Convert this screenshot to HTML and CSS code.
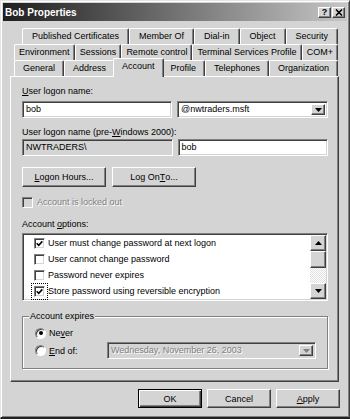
FILE: index.html
```html
<!DOCTYPE html>
<html lang="en">
<head>
    <meta charset="UTF-8">
    <title>Bob Properties</title>
    <link rel="stylesheet" href="styles.css">
</head>
<body>
    <div class="window">
        <div class="titlebar">
            <span class="title">Bob Properties</span>
            <span class="cap-buttons">
                <span class="cap-btn">?</span>
                <span class="cap-btn">
                    <svg width="8" height="7" viewBox="0 0 8 7"><path d="M1 .5L7 6.5M7 .5L1 6.5" stroke="#000" stroke-width="1.6"/></svg>
                </span>
            </span>
        </div>

        <div class="tabs">
            <div class="tab-row back">
                <div class="tab">Published Certificates</div>
                <div class="tab">Member Of</div>
                <div class="tab">Dial-in</div>
                <div class="tab">Object</div>
                <div class="tab">Security</div>
            </div>
            <div class="tab-row">
                <div class="tab">Environment</div>
                <div class="tab">Sessions</div>
                <div class="tab">Remote control</div>
                <div class="tab">Terminal Services Profile</div>
                <div class="tab">COM+</div>
            </div>
            <div class="tab-row">
                <div class="tab">General</div>
                <div class="tab">Address</div>
                <div class="tab selected">Account</div>
                <div class="tab">Profile</div>
                <div class="tab">Telephones</div>
                <div class="tab">Organization</div>
            </div>
        </div>

        <div class="panel">
            <div class="label first"><u>U</u>ser logon name:</div>
            <div class="field-row top">
                <div class="textbox">bob</div>
                <div class="combo">
                    <span class="combo-text">@nwtraders.msft</span>
                    <span class="drop-btn">
                        <svg width="7" height="4" viewBox="0 0 7 4"><path d="M0 0h7L3.5 4z"/></svg>
                    </span>
                </div>
            </div>
            <div class="label">User logon name (pre-<u>W</u>indows 2000):</div>
            <div class="field-row">
                <div class="textbox readonly">NWTRADERS\</div>
                <div class="textbox">bob</div>
            </div>
            <div class="button-row">
                <div class="btn wide"><u>L</u>ogon Hours...</div>
                <div class="btn wide">Log On <u>T</u>o...</div>
            </div>
            <div class="lock-row">
                <span class="check disabled"></span>
                <span class="disabled-text">Account is locked out</span>
            </div>
            <div class="label options-label">Account <u>o</u>ptions:</div>
            <div class="listbox">
                <div class="options">
                    <div class="option">
                        <span class="check"><svg width="7" height="7" viewBox="0 0 7 7"><path d="M.7 3.3L2.7 5.3L6.3 1.4" fill="none" stroke="#000" stroke-width="1.6"/></svg></span>
                        User must change password at next logon
                    </div>
                    <div class="option">
                        <span class="check"></span>
                        User cannot change password
                    </div>
                    <div class="option">
                        <span class="check"></span>
                        Password never expires
                    </div>
                    <div class="option">
                        <span class="check focused"><svg width="7" height="7" viewBox="0 0 7 7"><path d="M.7 3.3L2.7 5.3L6.3 1.4" fill="none" stroke="#000" stroke-width="1.6"/></svg></span>
                        Store password using reversible encryption
                    </div>
                </div>
                <div class="scrollbar">
                    <div class="sb-btn">
                        <svg width="7" height="4" viewBox="0 0 7 4"><path d="M0 4h7L3.5 0z"/></svg>
                    </div>
                    <div class="sb-thumb"></div>
                    <div class="sb-track"></div>
                    <div class="sb-btn">
                        <svg width="7" height="4" viewBox="0 0 7 4"><path d="M0 0h7L3.5 4z"/></svg>
                    </div>
                </div>
            </div>
            <fieldset class="expires">
                <legend>Account expires</legend>
                <div class="radio-row never">
                    <span class="radio on"></span>
                    <span>Ne<u>v</u>er</span>
                </div>
                <div class="radio-row end">
                    <span class="radio"></span>
                    <span class="end-label"><u>E</u>nd of:</span>
                    <div class="datepicker">
                        <span class="date-text">Wednesday, November 26, 2003</span>
                        <span class="drop-btn">
                            <svg width="7" height="4" viewBox="0 0 7 4"><path d="M0 0h7L3.5 4z" fill="#808080"/></svg>
                        </span>
                    </div>
                </div>
            </fieldset>
        </div>

        <div class="dialog-buttons">
            <div class="btn default">OK</div>
            <div class="btn">Cancel</div>
            <div class="btn"><u>A</u>pply</div>
        </div>
    </div>
</body>
</html>
```

FILE: styles.css
```css
body {
    margin: 0;
    background-color: #d4d4d4;
    font-family: 'Liberation Sans', Arial, sans-serif;
    font-size: 9px;
    color: #000;
    overflow: hidden;
}
.window {
    box-sizing: border-box;
    width: 350px;
    height: 419px;
    padding: 2px;
    background-color: #d4d4d4;
    border: 1px solid;
    border-bottom-width: 2px;
    border-color: #e4e4e4 #404040 #202020 #e4e4e4;
    box-shadow: inset 1px 1px #fff, inset -1px -1px #808080;
    display: flex;
    flex-direction: column;
}
.titlebar {
    height: 18px;
    padding: 0 2px;
    display: flex;
    align-items: center;
    justify-content: space-between;
    background: linear-gradient(to right, #1e1e1e, #c6c6c6);
    color: #fff;
    font-size: 10px;
    font-weight: bold;
}
.cap-buttons {
    display: flex;
    gap: 1px;
}
.cap-btn {
    box-sizing: border-box;
    width: 13px;
    height: 11px;
    display: flex;
    align-items: center;
    justify-content: center;
    background-color: #d4d4d4;
    border: 1px solid;
    border-color: #fff #404040 #404040 #fff;
    box-shadow: inset -1px -1px #808080;
    color: #000;
    font-size: 9px;
}

/* tabs */
.tabs {
    margin-top: 7px;
}
.tab-row {
    display: flex;
    height: 16px;
    padding: 0 9px 0 11px;
}
.tab-row.back {
    padding-left: 19px;
}
.tab {
    flex: 1 1 auto;
    box-sizing: border-box;
    height: 16px;
    padding: 0 3px;
    border-top: 1px solid #fff;
    border-left: 1px solid #fff;
    border-right: 1px solid #404040;
    border-radius: 2px 2px 0 0;
    box-shadow: inset -1px 0 #808080;
    background-color: #d4d4d4;
    line-height: 15px;
    text-align: center;
    white-space: nowrap;
}
.tab.selected {
    position: relative;
    z-index: 1;
    height: 19px;
    margin: -2px -2px -1px;
}

/* tab page */
.panel {
    box-sizing: border-box;
    height: 306px;
    margin: 0 8px 0 7px;
    padding: 0 10px 0 11px;
    border: 1px solid;
    border-color: #fff #404040 #404040 #fff;
    box-shadow: inset -1px -1px #808080;
}
.label {
    line-height: 12px;
    margin-top: 8px;
}
.field-row {
    display: flex;
    gap: 5px;
    margin-top: 1px;
}
.field-row.top {
    margin-top: 4px;
}
.textbox,
.combo,
.datepicker {
    box-sizing: border-box;
    height: 17px;
    border: 1px solid;
    border-color: #808080 #fff #fff #808080;
    box-shadow: inset 1px 1px #404040, inset -1px -1px #d4d4d4;
    background-color: #fff;
}
.textbox {
    flex: 1;
    padding-left: 3px;
    line-height: 15px;
}
.textbox.readonly {
    background-color: #d4d4d4;
}
.combo {
    flex: 1;
    display: flex;
    padding: 2px;
}
.combo-text,
.date-text {
    flex: 1;
    padding-left: 1px;
    line-height: 11px;
}
.drop-btn {
    box-sizing: border-box;
    width: 14px;
    display: flex;
    align-items: center;
    justify-content: center;
    background-color: #d4d4d4;
    border: 1px solid;
    border-color: #fff #404040 #404040 #fff;
    box-shadow: inset -1px -1px #808080;
}
.button-row {
    display: flex;
    gap: 6px;
    margin-top: 11px;
}
.btn {
    box-sizing: border-box;
    width: 64px;
    height: 19px;
    display: flex;
    align-items: center;
    justify-content: center;
    background-color: #d4d4d4;
    border: 1px solid;
    border-color: #fff #404040 #404040 #fff;
    box-shadow: inset -1px -1px #808080;
}
.btn.wide {
    width: 84px;
    height: 20px;
}
.btn.default {
    border-color: #000;
    box-shadow: inset 1px 1px #fff, inset -1px -1px #404040, inset -2px -2px #808080;
}
.check {
    box-sizing: border-box;
    width: 11px;
    height: 11px;
    flex: none;
    display: flex;
    align-items: center;
    justify-content: center;
    background-color: #fff;
    border: 1px solid;
    border-color: #808080 #fff #fff #808080;
    box-shadow: inset 1px 1px #404040, inset -1px -1px #d4d4d4;
}
.check.disabled {
    background-color: #d4d4d4;
}
.check.focused {
    outline: 1px dotted #000;
    outline-offset: 2px;
}
.lock-row {
    display: flex;
    align-items: center;
    gap: 4px;
    height: 12px;
    margin-top: 9px;
}
.disabled-text,
.date-text {
    color: #808080;
    text-shadow: 1px 1px #fff;
}
.options-label {
    margin-top: 10px;
}
.listbox {
    box-sizing: border-box;
    height: 68px;
    margin-top: 3px;
    padding: 1px;
    display: flex;
    background-color: #fff;
    border: 1px solid;
    border-color: #808080 #fff #fff #808080;
    box-shadow: inset 1px 1px #404040, inset -1px -1px #d4d4d4;
}
.options {
    flex: 1;
    padding-left: 10px;
}
.option {
    height: 16px;
    display: flex;
    align-items: center;
    gap: 3px;
    white-space: nowrap;
}
.scrollbar {
    width: 16px;
    display: flex;
    flex-direction: column;
}
.sb-btn,
.sb-thumb {
    box-sizing: border-box;
    height: 16px;
    display: flex;
    align-items: center;
    justify-content: center;
    background-color: #d4d4d4;
    border: 1px solid;
    border-color: #fff #404040 #404040 #fff;
    box-shadow: inset -1px -1px #808080;
}
.sb-thumb {
    height: 17px;
}
.sb-track {
    flex: 1;
    background: repeating-conic-gradient(#fff 0 25%, #e0e0e0 0 50%) 0 0 / 2px 2px;
}
.expires {
    margin: 9px 0 0;
    padding: 0 0 9px;
    min-width: 0;
    border: 1px solid #808080;
    box-shadow: inset 1px 1px #fff, 1px 1px #fff;
}
.expires legend {
    margin-left: 6px;
    padding: 0 1px;
    line-height: 12px;
    background-color: #d4d4d4;
}
.radio-row {
    display: flex;
    align-items: center;
    gap: 3px;
    padding-left: 12px;
}
.radio-row.never {
    height: 14px;
    margin-top: 4px;
}
.radio-row.end {
    height: 17px;
    margin-top: 2px;
}
.radio {
    box-sizing: border-box;
    width: 11px;
    height: 11px;
    display: flex;
    align-items: center;
    justify-content: center;
    border-radius: 50%;
    background-color: #fff;
    border: 1px solid;
    border-color: #808080 #fff #fff #808080;
    box-shadow: inset 1px 1px #404040;
}
.radio.on::after {
    content: "";
    width: 4px;
    height: 4px;
    border-radius: 50%;
    background-color: #000;
}
.end-label {
    width: 55px;
}
.datepicker {
    width: 209px;
    display: flex;
    padding: 2px;
    background-color: #d4d4d4;
}

.dialog-buttons {
    display: flex;
    justify-content: flex-end;
    gap: 5px;
    margin: 7px 7px 0 0;
}
```
